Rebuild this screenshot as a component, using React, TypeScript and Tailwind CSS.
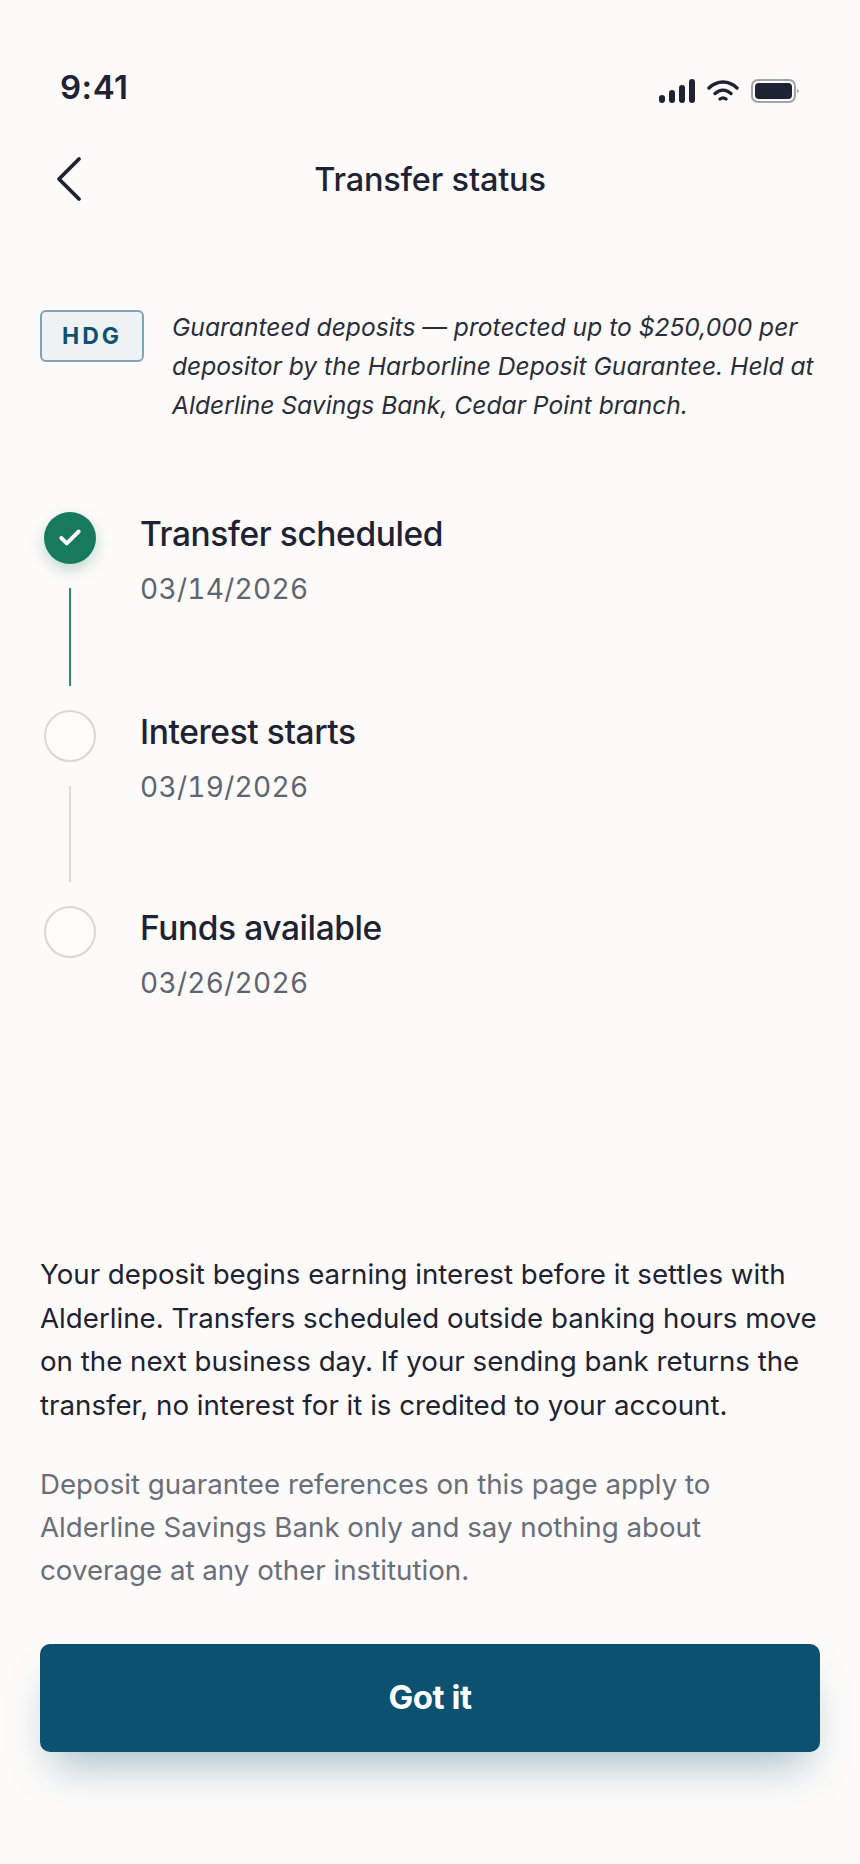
import { Check } from 'lucide-react'

const steps = [
  { title: 'Transfer scheduled', date: '03/14/2026', done: true },
  { title: 'Interest starts', date: '03/19/2026', done: false },
  { title: 'Funds available', date: '03/26/2026', done: false },
]

function StatusIcons() {
  return (
    <div className="flex items-center gap-[12px] mt-[8px]">
      <svg width="36" height="24" viewBox="0 0 36 24" fill="#1f2233">
        <rect x="0" y="16" width="6" height="8" rx="3" />
        <rect x="10" y="11" width="6" height="13" rx="3" />
        <rect x="20" y="6" width="6" height="18" rx="3" />
        <rect x="30" y="0" width="6" height="24" rx="3" />
      </svg>
      <svg width="32" height="22" viewBox="0 0 32 22" fill="none" stroke="#1f2233" strokeWidth="3.4" strokeLinecap="round">
        <path d="M2 8 C10 0 22 0 30 8" />
        <path d="M8 13.5 C13 9 19 9 24 13.5" />
        <path d="M13 19 C15 17.5 17 17.5 19 19" />
      </svg>
      <svg width="48" height="24" viewBox="0 0 48 24" fill="none">
        <rect x="1" y="1" width="43" height="22" rx="6" stroke="#a3a5ab" strokeWidth="2" />
        <rect x="4" y="4" width="37" height="16" rx="4" fill="#1f2233" />
        <path d="M46 9.5 L48 12 L46 14.5 Z" fill="#a3a5ab" />
      </svg>
    </div>
  )
}

export default function App() {
  return (
    <div className="w-[860px] h-[1864px] bg-[#fcfbfa] flex flex-col font-['Inter',sans-serif] text-[#1f2233] overflow-hidden">
      <div className="flex items-center justify-between pt-[66px] pl-[60px] pr-[61px] h-[108px]">
        <span className="text-[33px] leading-[40px] font-semibold tracking-[0.5px]">9:41</span>
        <StatusIcons />
      </div>

      <div className="relative flex items-center justify-center h-[72px] mt-[36px]">
        <svg className="absolute left-[56px] top-[12px]" width="26" height="46" viewBox="0 0 26 46" fill="none" stroke="#1f2233" strokeWidth="3.8" strokeLinecap="round" strokeLinejoin="round">
          <path d="M23 3 L3 23 L23 43" />
        </svg>
        <h1 className="text-[32.5px] font-medium leading-[40px] tracking-[-0.2px]">Transfer status</h1>
      </div>

      <div className="flex items-start px-[40px] mt-[94px] gap-[28px]">
        <div className="w-[104px] h-[52px] shrink-0 rounded-[6px] border-2 border-[#7fa5b5] bg-[#eef2f3] flex items-center justify-center text-[#0c5270] text-[23px] font-bold tracking-[3px]">
          HDG
        </div>
        <p className="text-[24.6px] leading-[39px] italic text-[#2a2d3b] -mt-[2px]">
          Guaranteed deposits — protected up to $250,000 per depositor by the Harborline Deposit Guarantee. Held at Alderline Savings Bank, Cedar Point branch.
        </p>
      </div>

      <div className="flex flex-col px-[44px] mt-[87px]">
        {steps.map((step, i) => (
          <div key={step.title} className={`flex gap-[44px] ${i === 0 ? 'h-[198px]' : 'h-[196px]'}`}>
            <div className="flex flex-col items-center w-[52px] shrink-0">
              {step.done ? (
                <div className="w-[52px] h-[52px] rounded-full bg-[#177a5c] flex items-center justify-center shadow-[0_6px_14px_rgba(23,122,92,0.25)]">
                  <Check size={26} color="white" strokeWidth={3.6} />
                </div>
              ) : (
                <div className="w-[52px] h-[52px] rounded-full border-2 border-[#d8d8d6] bg-[#fdfcfb]" />
              )}
              {i < 2 && (
                <div className={`w-[2px] mt-[24px] ${step.done ? 'h-[98px] bg-[#2f8a6e]' : 'h-[96px] bg-[#dcdcda]'}`} />
              )}
            </div>
            <div className="flex flex-col">
              <span className="text-[33.5px] leading-[44px] font-medium tracking-[-0.4px]">{step.title}</span>
              <span className="text-[28px] leading-[36px] mt-[15px] text-[#5f6473] tracking-[0.3px] tabular-nums">{step.date}</span>
            </div>
          </div>
        ))}
      </div>

      <div className="flex-1" />

      <div className="px-[40px]">
        <p className="text-[27.7px] leading-[43.5px] text-[#1f2233]">
          Your deposit begins earning interest before it settles with Alderline. Transfers scheduled outside banking hours move on the next business day. If your sending bank returns the transfer, no interest for it is credited to your account.
        </p>
        <p className="text-[27.7px] leading-[43px] text-[#6a6e7b] mt-[36px]">
          Deposit guarantee references on this page apply to Alderline Savings Bank only and say nothing about coverage at any other institution.
        </p>
        <button className="w-full h-[108px] mt-[52px] mb-[112px] rounded-[10px] bg-[#0c5270] text-white text-[33px] font-bold tracking-[-0.5px] shadow-[0_26px_44px_-14px_rgba(12,82,112,0.36)]">
          Got it
        </button>
      </div>
    </div>
  )
}
